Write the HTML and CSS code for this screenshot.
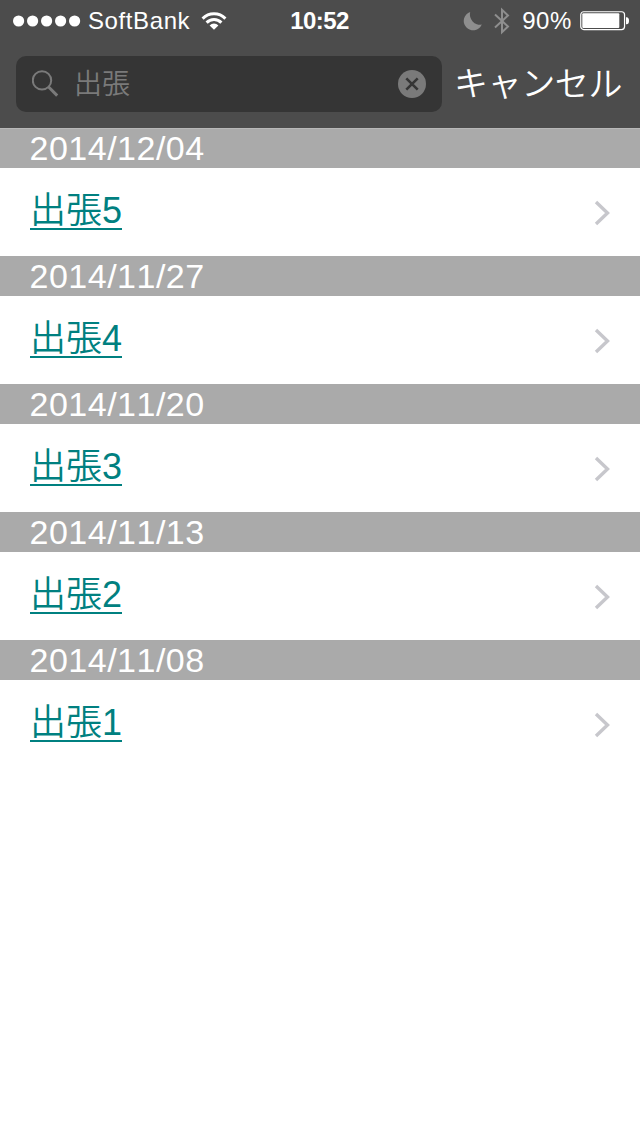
FILE: index.html
```html
<!DOCTYPE html>
<html lang="ja">
<head>
    <meta charset="UTF-8">
    <meta name="viewport" content="width=device-width, initial-scale=1.0">
    <title>出張</title>
    <link rel="stylesheet" href="styles.css">
</head>
<body>
    <header class="header">
        <div class="status-bar">
            <div class="status-left">
                <svg class="signal" width="68" height="12" viewBox="0 0 68 12" fill="#fff">
                    <circle cx="5.6" cy="6" r="5.6"/>
                    <circle cx="19.6" cy="6" r="5.6"/>
                    <circle cx="33.6" cy="6" r="5.6"/>
                    <circle cx="47.6" cy="6" r="5.6"/>
                    <circle cx="61.6" cy="6" r="5.6"/>
                </svg>
                <span class="carrier">SoftBank</span>
                <svg class="wifi" width="26" height="20" viewBox="0 0 26 20" fill="none" stroke="#fff" stroke-width="3">
                    <path d="M1.6 7.6a16 16 0 0 1 22.8 0"/>
                    <path d="M5.6 11.6a10.4 10.4 0 0 1 14.8 0"/>
                    <path d="M13 18.8l-4.4-4.4a6.2 6.2 0 0 1 8.8 0z" fill="#fff" stroke="none"/>
                </svg>
            </div>
            <span class="time">10:52</span>
            <div class="status-right">
                <svg class="moon" width="20" height="20" viewBox="0 0 20 20" fill="#8e8e8e">
                    <path d="M7.2 1A10.3 10.3 0 0 0 18.8 13.6A9.4 9.4 0 1 1 7.2 1z"/>
                </svg>
                <svg class="bluetooth" width="16" height="28" viewBox="0 0 16 28" fill="none" stroke="#8e8e8e" stroke-width="2">
                    <path d="M1 7.5l13 12-6 5.7V2.8l6 5.7-13 12"/>
                </svg>
                <span class="percent">90%</span>
                <svg class="battery" width="50" height="20" viewBox="0 0 50 20">
                    <rect x=".75" y=".75" width="43.8" height="17.8" rx="3" fill="none" stroke="#fff" stroke-width="1.2"/>
                    <rect x="2.3" y="2.3" width="37" height="14.8" rx="1" fill="#fff"/>
                    <path d="M46 6.2h.6a2.4 3.5 0 0 1 0 7H46z" fill="#fff"/>
                </svg>
            </div>
        </div>
        <div class="search-bar">
            <div class="search-field">
                <svg class="search-icon" width="28" height="28" viewBox="0 0 28 28" fill="none" stroke="#7a7a7a">
                    <circle cx="10" cy="10.4" r="9.2" stroke-width="2"/>
                    <path d="M16.4 16.8l8.8 8.8" stroke-width="3"/>
                </svg>
                <span class="search-text">出張</span>
                <svg class="clear" width="28" height="28" viewBox="0 0 28 28">
                    <circle cx="14" cy="14" r="14" fill="#7a7a7a"/>
                    <path d="M8.3 8.3l11.4 11.4M19.7 8.3L8.3 19.7" stroke="#353535" stroke-width="2.6"/>
                </svg>
            </div>
            <a class="cancel">キャンセル</a>
        </div>
    </header>

    <main class="list">
        <h2 class="date first">2014/12/04</h2>
        <div class="row">
            <a class="title">出張5</a>
            <svg class="arrow" width="18" height="28" viewBox="0 0 18 28"><path d="M3 3l11.5 11L3 25"/></svg>
        </div>
        <h2 class="date">2014/11/27</h2>
        <div class="row">
            <a class="title">出張4</a>
            <svg class="arrow" width="18" height="28" viewBox="0 0 18 28"><path d="M3 3l11.5 11L3 25"/></svg>
        </div>
        <h2 class="date">2014/11/20</h2>
        <div class="row">
            <a class="title">出張3</a>
            <svg class="arrow" width="18" height="28" viewBox="0 0 18 28"><path d="M3 3l11.5 11L3 25"/></svg>
        </div>
        <h2 class="date">2014/11/13</h2>
        <div class="row">
            <a class="title">出張2</a>
            <svg class="arrow" width="18" height="28" viewBox="0 0 18 28"><path d="M3 3l11.5 11L3 25"/></svg>
        </div>
        <h2 class="date">2014/11/08</h2>
        <div class="row">
            <a class="title">出張1</a>
            <svg class="arrow" width="18" height="28" viewBox="0 0 18 28"><path d="M3 3l11.5 11L3 25"/></svg>
        </div>
    </main>
</body>
</html>
```
FILE: styles.css
```css
* {
    box-sizing: border-box;
}
body {
    margin: 0;
    background-color: #fff;
    font-family: "Liberation Sans", "Noto Sans CJK JP", sans-serif;
    font-weight: 400;
    font-kerning: none;
}
svg {
    display: block;
    flex: none;
}
.header {
    height: 128px;
    background-color: #4c4c4c;
    color: #fff;
}

/* Status bar */
.status-bar {
    display: grid;
    grid-template-columns: 1fr auto 1fr;
    align-items: center;
    height: 40px;
    padding: 2px 10px 0 13px;
    font-size: 24px;
    line-height: 38px;
}
.status-left, .status-right {
    display: flex;
    align-items: center;
}
.status-right {
    justify-content: flex-end;
}
.carrier {
    margin: 0 11px 0 7px;
    letter-spacing: 0.6px;
}
.time {
    margin-left: -4px;
    font-weight: bold;
    letter-spacing: -0.6px;
}
.bluetooth {
    margin-left: 11px;
}
.percent {
    margin: 0 8px 0 12px;
    letter-spacing: 0.6px;
}

/* Search */
.search-bar {
    display: flex;
    align-items: center;
    height: 88px;
    padding: 0 16px;
}
.search-field {
    display: flex;
    align-items: center;
    width: 426px;
    height: 56px;
    padding: 0 16px;
    border-radius: 10px;
    background-color: #353535;
}
.search-text {
    flex: 1;
    margin-left: 14px;
    color: #7a7a7a;
    font-size: 28px;
    font-weight: 350;
    line-height: 57px;
}
.cancel {
    margin-left: 12px;
    font-size: 34px;
    font-weight: 350;
    letter-spacing: -0.4px;
    line-height: 56px;
    white-space: nowrap;
}

/* List */
.date {
    height: 40px;
    margin: 0;
    padding-left: 29.5px;
    background-color: #aaa;
    color: #fff;
    font-size: 34px;
    font-weight: 400;
    letter-spacing: 0.5px;
    line-height: 41px;
}
.date.first {
    border-top: 1px solid #b8b8b8;
    line-height: 39px;
}
.row {
    display: flex;
    justify-content: space-between;
    height: 88px;
    padding: 20px 29.5px 0 30px;
}
.title {
    height: 42px;
    border-bottom: 2px solid #008080;
    color: #008080;
    font-size: 36px;
    font-weight: 350;
    line-height: 45px;
}
.arrow {
    margin-top: 11px;
    fill: none;
    stroke: #c7c7cc;
    stroke-width: 3.4;
}
```
